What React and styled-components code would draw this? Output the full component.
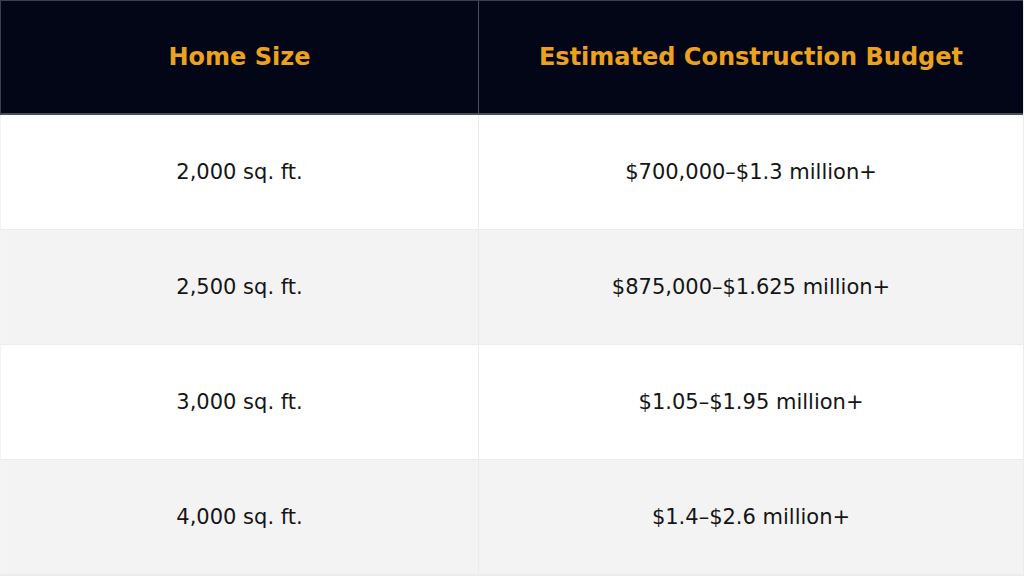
import React from 'react';
import styled, { createGlobalStyle } from 'styled-components';

const GlobalStyle = createGlobalStyle`
  html, body {
    margin: 0;
    padding: 0;
    background: #fff;
  }
`

const Table = styled.div`
  width: 1024px;
  height: 576px;
  display: grid;
  grid-template-columns: 478px 1fr;
  grid-template-rows: repeat(5, 1fr);
  font-family: "DejaVu Sans", "Noto Sans", sans-serif;
  box-sizing: border-box;
  border-right: 1px solid #ececec;
  border-bottom: 1px solid #ececec;
`

const HeadCell = styled.div`
  background: #020617;
  color: #eca11f;
  font-weight: 700;
  font-size: 24px;
  display: flex;
  align-items: center;
  justify-content: center;
  border-top: 1px solid #3b3f49;
  border-bottom: 2px solid #4a4e58;
  border-left: ${p => p.first ? '1px solid #3b3f49' : '1px solid #4a4e58'};
`

const Cell = styled.div`
  background: ${p => p.striped ? '#f3f3f3' : '#ffffff'};
  color: #151515;
  font-size: 21px;
  display: flex;
  align-items: center;
  justify-content: center;
  border-bottom: 1px solid #ececec;
  border-left: 1px solid ${p => p.first ? '#f4f4f4' : '#ececec'};
`

const rows = [
  ['2,000 sq. ft.', '$700,000–$1.3 million+'],
  ['2,500 sq. ft.', '$875,000–$1.625 million+'],
  ['3,000 sq. ft.', '$1.05–$1.95 million+'],
  ['4,000 sq. ft.', '$1.4–$2.6 million+'],
]

const App = () => {
  return (
    <>
      <GlobalStyle />
      <Table>
        <HeadCell first>Home Size</HeadCell>
        <HeadCell>Estimated Construction Budget</HeadCell>
        {rows.map((r, i) => (
          <React.Fragment key={r[0]}>
            <Cell first striped={i % 2 === 1}>{r[0]}</Cell>
            <Cell striped={i % 2 === 1}>{r[1]}</Cell>
          </React.Fragment>
        ))}
      </Table>
    </>
  );
};

export default App;
